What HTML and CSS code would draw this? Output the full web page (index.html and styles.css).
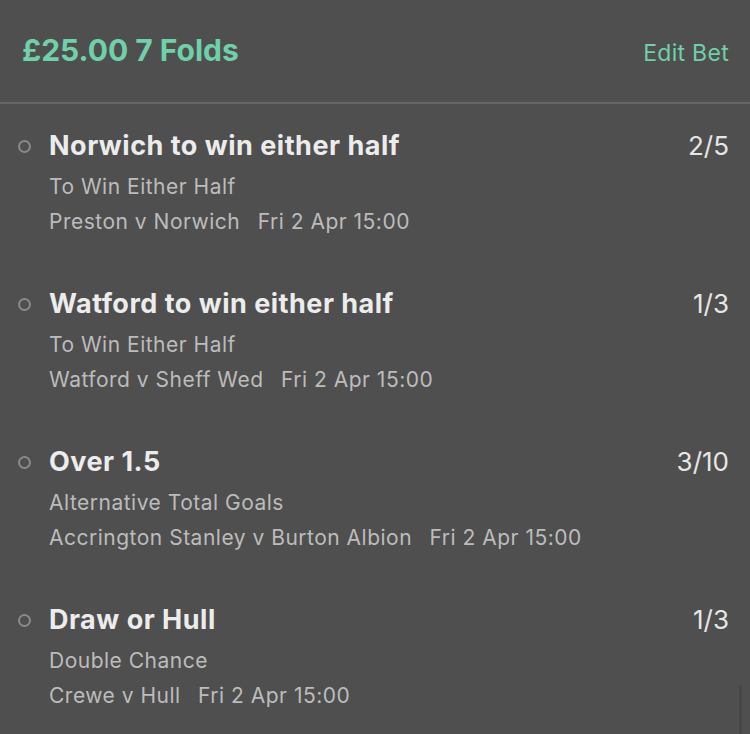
FILE: index.html
```html
<!DOCTYPE html>
<html lang="en">
<head>
    <meta charset="UTF-8">
    <meta name="viewport" content="width=device-width, initial-scale=1.0">
    <title>My Bets</title>
    <link rel="stylesheet" href="styles.css">
</head>
<body>
    <div class="bet-header">
        <h1 class="bet-title">£25.00 7 Folds</h1>
        <a class="edit-bet">Edit Bet</a>
    </div>

    <div class="selection-list">
        <div class="selection">
            <span class="status-dot"></span>
            <div class="selection-info">
                <div class="selection-name">Norwich to win either half</div>
                <div class="selection-market">To Win Either Half</div>
                <div class="selection-event">Preston v Norwich <span class="event-time">Fri 2 Apr 15:00</span></div>
            </div>
            <div class="selection-odds">2/5</div>
        </div>

        <div class="selection">
            <span class="status-dot"></span>
            <div class="selection-info">
                <div class="selection-name">Watford to win either half</div>
                <div class="selection-market">To Win Either Half</div>
                <div class="selection-event">Watford v Sheff Wed <span class="event-time">Fri 2 Apr 15:00</span></div>
            </div>
            <div class="selection-odds">1/3</div>
        </div>

        <div class="selection">
            <span class="status-dot"></span>
            <div class="selection-info">
                <div class="selection-name">Over 1.5</div>
                <div class="selection-market">Alternative Total Goals</div>
                <div class="selection-event">Accrington Stanley v Burton Albion <span class="event-time">Fri 2 Apr 15:00</span></div>
            </div>
            <div class="selection-odds">3/10</div>
        </div>

        <div class="selection">
            <span class="status-dot"></span>
            <div class="selection-info">
                <div class="selection-name">Draw or Hull</div>
                <div class="selection-market">Double Chance</div>
                <div class="selection-event">Crewe v Hull <span class="event-time">Fri 2 Apr 15:00</span></div>
            </div>
            <div class="selection-odds">1/3</div>
        </div>
    </div>

    <div class="scroll-thumb"></div>
</body>
</html>
```

FILE: styles.css
```css
body {
    font-family: Inter, "Noto Sans", sans-serif;
    background-color: #4f4f4f;
    color: #ececec;
    margin: 0;
    height: 734px;
    overflow: hidden;
    position: relative;
}
.bet-header {
    display: flex;
    justify-content: space-between;
    align-items: baseline;
    padding: 30px 21px 0 22px;
    height: 72px;
    border-bottom: 2px solid #666666;
}
.bet-title {
    margin: 0;
    font-size: 30px;
    font-weight: 700;
    line-height: 40px;
    color: #6fd0a9;
}
.edit-bet {
    font-size: 23px;
    letter-spacing: 0.3px;
    color: #6fd0a9;
    cursor: pointer;
}
.selection-list {
    padding-top: 25px;
}
.selection {
    display: flex;
    align-items: flex-start;
    padding: 0 21px 0 18px;
    height: 158px;
}
.status-dot {
    width: 9px;
    height: 9px;
    border: 2px solid #8a8a8a;
    border-radius: 50%;
    margin-top: 11px;
    margin-right: 18px;
    flex-shrink: 0;
}
.selection-info {
    flex: 1;
}
.selection-name {
    font-size: 27px;
    font-weight: 700;
    letter-spacing: 0.5px;
    line-height: 34px;
}
.selection-market, .selection-event {
    font-size: 21px;
    letter-spacing: 0.5px;
    line-height: 36px;
    color: #bcbcbc;
}
.selection-market {
    margin-top: 6px;
}
.selection-event {
    margin-top: -1px;
}
.event-time {
    margin-left: 11px;
}
.selection-odds {
    font-size: 26px;
    line-height: 34px;
    color: #e6e6e6;
}
.scroll-thumb {
    position: absolute;
    right: 8px;
    top: 685px;
    width: 3px;
    height: 60px;
    border-radius: 2px;
    background-color: #474747;
}
```
